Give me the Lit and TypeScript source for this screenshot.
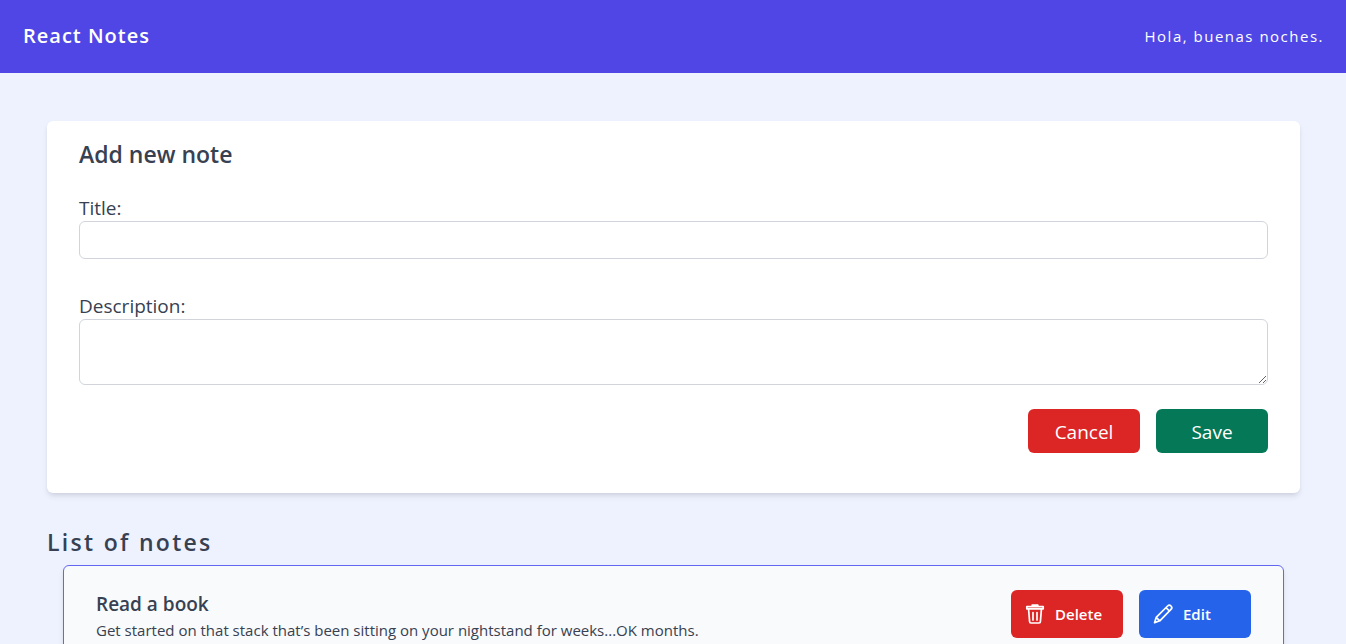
import { LitElement, html, css, svg } from "lit";
import { customElement, property, state } from "lit/decorators.js";

interface Note {
  title: string;
  description: string;
}

const trashIcon = svg`
  <path d="M1.8 2.6h16.4v2.2H1.8zM7.2 2.2V1h5.6v1.2M3.6 5.4l1 12.2a1.4 1.4 0 0 0 1.4 1.4h8a1.4 1.4 0 0 0 1.4-1.4l1-12.2M8 8.5v7.5M12 8.5v7.5"></path>`;

const pencilIcon = svg`
  <path d="M1.6 18.6l1.6-5.2L14.6 2a2.4 2.4 0 0 1 3.4 3.4L6.8 16.8zM13 3.6l3.4 3.4M3.2 13.4l3.6 3.4"></path>`;

@customElement("note-card")
export class NoteCard extends LitElement {
  @property({ attribute: false }) note: Note = { title: "", description: "" };

  static styles = css`
    :host {
      display: block;
    }
    .card {
      display: flex;
      justify-content: space-between;
      align-items: flex-start;
      gap: 32px;
      padding: 24px 32px;
      background: #f9fafb;
      border: 1px solid #6366f1;
      border-radius: 6px;
      box-shadow: 0 4px 6px -1px rgba(0, 0, 0, 0.1), 0 2px 4px -1px rgba(0, 0, 0, 0.06);
    }
    .title {
      margin: 0;
      font-size: 19px;
      line-height: 28px;
      font-weight: 600;
    }
    .description {
      margin: 0;
      font-size: 15px;
      line-height: 24px;
    }
    .actions {
      display: flex;
      gap: 16px;
    }
    .button {
      display: flex;
      align-items: center;
      gap: 8px;
      width: 112px;
      height: 48px;
      padding: 0 12px;
      border: 0;
      border-radius: 6px;
      color: #fff;
      font: 600 15px/24px "Open Sans", "Noto Sans", sans-serif;
      cursor: pointer;
    }
    .delete {
      background: #dc2626;
    }
    .edit {
      background: #2563eb;
    }
    .icon {
      width: 20px;
      height: 20px;
      padding: 0 2px;
      fill: none;
      stroke: currentColor;
      stroke-width: 1.7;
      stroke-linejoin: round;
      stroke-linecap: round;
    }
  `;

  render() {
    return html`
      <article class="card">
        <div>
          <h3 class="title">${this.note.title}</h3>
          <p class="description">${this.note.description}</p>
        </div>
        <div class="actions">
          <button class="button delete" type="button">
            <svg class="icon" viewBox="0 0 20 20" aria-hidden="true">${trashIcon}</svg>
            Delete
          </button>
          <button class="button edit" type="button">
            <svg class="icon" viewBox="0 0 20 20" aria-hidden="true">${pencilIcon}</svg>
            Edit
          </button>
        </div>
      </article>
    `;
  }
}

@customElement("app-root")
export class AppRoot extends LitElement {
  @state() private notes: Note[] = [
    {
      title: "Read a book",
      description:
        "Get started on that stack that’s been sitting on your nightstand for weeks...OK months.",
    },
  ];

  static styles = css`
    :host {
      display: block;
      min-height: 100vh;
      box-sizing: border-box;
      padding-bottom: 32px;
      background: #eef2ff;
      color: #374151;
      font-family: "Open Sans", "Noto Sans", sans-serif;
    }
    .header {
      display: flex;
      justify-content: space-between;
      align-items: center;
      padding: 22px 22px 23px 23px;
      background: #4f46e5;
      color: #fff;
    }
    .brand {
      margin: 0;
      font-size: 20px;
      line-height: 28px;
      font-weight: 600;
      letter-spacing: 0.05em;
    }
    .greeting {
      font-size: 15px;
      line-height: 24px;
      letter-spacing: 0.1em;
    }
    .main {
      padding: 48px 46px 0 47px;
    }
    .form {
      padding: 16px 32px 40px;
      background: #fff;
      border-radius: 6px;
      box-shadow: 0 4px 6px -1px rgba(0, 0, 0, 0.1), 0 2px 4px -1px rgba(0, 0, 0, 0.06);
    }
    .heading {
      margin: 0;
      font-size: 23px;
      line-height: 34px;
      font-weight: 600;
    }
    .field {
      display: flex;
      flex-direction: column;
      margin-top: 24px;
    }
    .field + .field {
      margin-top: 34px;
    }
    .label {
      font-size: 19px;
      line-height: 26px;
    }
    .control {
      box-sizing: border-box;
      width: 100%;
      height: 38px;
      padding: 8px 12px;
      border: 1px solid #d1d5db;
      border-radius: 6px;
      background: #fff;
      color: inherit;
      font: 15px/24px "Open Sans", "Noto Sans", sans-serif;
    }
    .area {
      height: 66px;
      resize: vertical;
    }
    .actions {
      display: flex;
      justify-content: flex-end;
      gap: 16px;
      margin-top: 24px;
    }
    .button {
      width: 112px;
      height: 44px;
      padding: 2px 0 0;
      border: 0;
      border-radius: 6px;
      color: #fff;
      font: 19px/28px "Open Sans", "Noto Sans", sans-serif;
      cursor: pointer;
    }
    .cancel {
      background: #dc2626;
    }
    .save {
      background: #047857;
    }
    .list-heading {
      margin: 32px 0 6px;
      letter-spacing: 0.1em;
    }
    .list {
      display: flex;
      flex-direction: column;
      gap: 16px;
      padding: 0 16px;
    }
  `;

  render() {
    return html`
      <header class="header">
        <h1 class="brand">React Notes</h1>
        <span class="greeting">Hola, buenas noches.</span>
      </header>
      <main class="main">
        <form class="form" @submit=${(e: Event) => e.preventDefault()}>
          <h2 class="heading">Add new note</h2>
          <div class="field">
            <label class="label" for="title">Title:</label>
            <input class="control" id="title" type="text" />
          </div>
          <div class="field">
            <label class="label" for="description">Description:</label>
            <textarea class="control area" id="description"></textarea>
          </div>
          <div class="actions">
            <button class="button cancel" type="reset">Cancel</button>
            <button class="button save" type="submit">Save</button>
          </div>
        </form>
        <h2 class="heading list-heading">List of notes</h2>
        <section class="list">
          ${this.notes.map((note) => html`<note-card .note=${note}></note-card>`)}
        </section>
      </main>
    `;
  }
}
